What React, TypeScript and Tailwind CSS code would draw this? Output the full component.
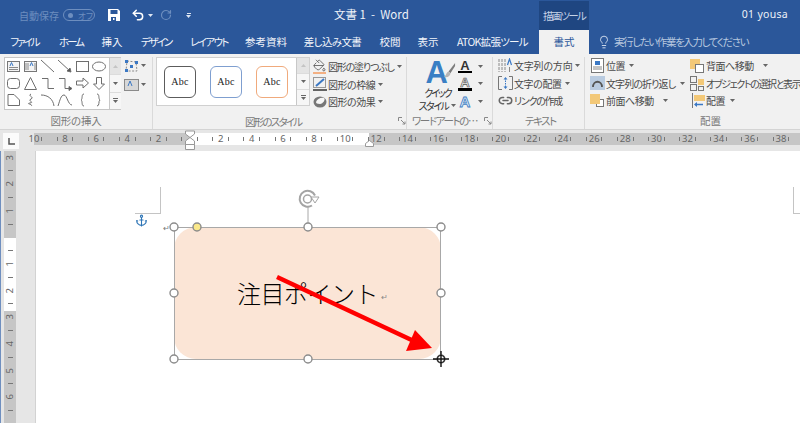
import type { ReactNode } from "react";
import { Anchor, Lightbulb, Link2, PaintBucket, RotateCcw, Undo2 } from "lucide-react";

const JP = "font-['Noto_Sans_CJK_JP','Noto_Sans',sans-serif] [font-feature-settings:'palt']";

const TABS = [
  { label: "ファイル", w: "w-[49px] tracking-[-2px]" },
  { label: "ホーム", w: "w-[44px] tracking-[-2px]" },
  { label: "挿入", w: "w-[38px]" },
  { label: "デザイン", w: "w-[50px] tracking-[-2px]" },
  { label: "レイアウト", w: "w-[56px] tracking-[-1.6px]" },
  { label: "参考資料", w: "w-[58px]" },
  { label: "差し込み文書", w: "w-[75px] tracking-[-0.6px]" },
  { label: "校閲", w: "w-[40px]" },
  { label: "表示", w: "w-[36px]" },
  { label: "ATOK拡張ツール", w: "w-[93px] tracking-[-0.7px]" },
];

function Caret({ className = "" }: { className?: string }) {
  return (
    <svg width="5" height="3" viewBox="0 0 5 3" className={`shrink-0 ${className}`}>
      <path d="M0 0h5L2.5 3z" fill="#666" />
    </svg>
  );
}

function Launcher() {
  return (
    <svg width="8" height="8" viewBox="0 0 8 8" className="shrink-0">
      <path d="M.5 4V.5H4M3 3l4 4M7 4.5V7H4.500" fill="none" stroke="#888" />
    </svg>
  );
}

function Cmd({ icon, label, caretClass = "ml-[3px]", textClass = "tracking-[-0.5px]" }: { icon: ReactNode; label: string; caretClass?: string; textClass?: string }) {
  return (
    <div className="flex h-[17.5px] items-center">
      <div className="flex w-[15px] shrink-0 items-center justify-center">{icon}</div>
      <span className={`ml-[1px] whitespace-nowrap text-[10px] text-[#4a4a4a] ${textClass}`}>{label}</span>
      {caretClass !== "hidden" && <Caret className={caretClass} />}
    </div>
  );
}

function GroupLabel({ children, className = "" }: { children: ReactNode; className?: string }) {
  return <span className={`whitespace-nowrap text-[10.5px] text-[#7a7a7a] ${className}`}>{children}</span>;
}

function ScrollButtons({ className }: { className: string }) {
  return (
    <div className={`flex shrink-0 flex-col border-l border-[#c8c8c8] ${className}`}>
      <div className="flex flex-1 items-center justify-center bg-[#e4e4e4]">
        <svg width="5" height="3" viewBox="0 0 5 3"><path d="M0 3h5L2.5 0z" fill="#c4c4c4" /></svg>
      </div>
      <div className="flex flex-1 items-center justify-center border-y border-[#dcdcdc] bg-[#f6f6f6]">
        <Caret />
      </div>
      <div className="flex flex-1 flex-col items-center justify-center gap-[1px] bg-[#f6f6f6]">
        <div className="h-[1px] w-[5px] bg-[#666]" />
        <Caret />
      </div>
    </div>
  );
}

function ShapeGallery() {
  return (
    <svg width="104" height="50" viewBox="5 59 104 50" className="shrink-0" fill="none" stroke="#6e6e6e" strokeWidth="1">
      <rect x="7.5" y="62.5" width="12" height="10" stroke="#777" fill="#f4f4f4" />
      <path d="M9 68.5h9M9 70.5h9" stroke="#8a8a8a" />
      <path d="M10 67l1.5-3.5L13 67" stroke="#3b78c4" />
      <rect x="24.5" y="62.5" width="12" height="10" stroke="#777" fill="#f4f4f4" />
      <path d="M26 64v7M28 64v7M35 64v7" stroke="#8a8a8a" />
      <path d="M30 67l1.5-3.5L33 67" stroke="#3b78c4" />
      <path d="M41 61l13 12" />
      <path d="M58 61l13 12" />
      <path d="M71 73l-4-1 3-3z" fill="#555" />
      <rect x="76.5" y="62.5" width="12" height="10" />
      <ellipse cx="99" cy="67.5" rx="6.5" ry="4.5" />
      <rect x="7.5" y="79.5" width="12" height="10" rx="3" />
      <path d="M24.5 90.5l6-12 6 12z" />
      <path d="M42 79.5h6v10h6" />
      <path d="M59 79.5h6v10h5" />
      <path d="M72 89.5l-3-2v4z" fill="#555" />
      <path d="M76.5 82h6.5v-3l5.500 5-5.500 5v-3h-6.500z" />
      <path d="M96.500 78.500h5v6.500h3l-5.500 5.500-5.500-5.500h3z" />
      <path d="M8 95.500h6l5.500 5.500v5.500h-11.500z" strokeLinejoin="round" />
      <path d="M31 95c-4 2 4 3 0 5s4 3-1 4 4 1 1 3" />
      <path d="M41 96c7 0 12 4 13 11" />
      <path d="M58 107c2-6 3-11 6-11s4 10 8 10" />
      <path d="M84 95c-3 0-1 5-3 6 2 1 0 6 3 6" />
      <path d="M97 95c3 0 1 5 3 6-2 1 0 6-3 6" />
    </svg>
  );
}

function StyleCard({ border }: { border: string }) {
  return (
    <div className={`flex h-[32px] w-[32px] shrink-0 items-center justify-center rounded-[6px] border-[1.5px] bg-white ${border}`}>
      <span className="font-['Liberation_Serif',serif] text-[10px] tracking-[0.3px] text-[#222]">Abc</span>
    </div>
  );
}

function UnderA({ outline = false }: { outline?: boolean }) {
  return (
    <div className="flex w-[14px] flex-col items-center">
      <span
        className={`font-['Liberation_Sans',sans-serif] text-[13px] font-bold leading-[11px] ${outline ? "text-[#f4f4f4] [-webkit-text-stroke:0.7px_#555]" : "text-[#333]"}`}
      >
        A
      </span>
      <div className={`w-[14px] bg-black ${outline ? "h-[3px]" : "h-[2px]"}`} />
    </div>
  );
}

function OrangeFront() {
  return (
    <svg width="15" height="14" viewBox="0 0 15 14">
      <rect x="6.500" y="5.500" width="7" height="7" fill="#fff" stroke="#777" />
      <rect x="0" y="0" width="10" height="10" fill="#f3c877" />
    </svg>
  );
}

function OrangeBack() {
  return (
    <svg width="15" height="14" viewBox="0 0 15 14">
      <rect x="0" y="0" width="10" height="10" fill="#f3c877" />
      <rect x="5.500" y="5.500" width="8" height="8" fill="#fff" stroke="#777" />
    </svg>
  );
}

function Ribbon() {
  return (
    <div className="flex h-[76px] items-stretch border-b border-[#d4d4d4] bg-[#f1f1f1] pt-[3px]">
      <div className="flex w-[153px] shrink-0 flex-col border-r border-[#dadada]">
        <div className="flex pl-[4px]">
          <div className="flex h-[53px] w-[117px] shrink-0 border border-[#c6c6c6] bg-white">
            <ShapeGallery />
            <ScrollButtons className="w-[12px]" />
          </div>
          <div className="ml-[3px] flex flex-col gap-[4px] pt-[1px]">
            <div className="flex h-[15px] items-center gap-[2px]">
              <svg width="15" height="14" viewBox="0 0 15 14" fill="none">
                <path d="M3 2l9 1 1 9-11 0z" stroke="#8a8a8a" strokeDasharray="2 1.500" />
                <rect x="1" y="1" width="3" height="3" fill="#3b78c4" />
                <rect x="11" y="2" width="3" height="3" fill="#3b78c4" />
                <rect x="6" y="6" width="3" height="3" fill="#3b78c4" />
                <rect x="1" y="10" width="3" height="3" fill="#3b78c4" />
              </svg>
              <Caret />
            </div>
            <div className="flex h-[15px] items-center gap-[2px]">
              <svg width="15" height="12" viewBox="0 0 15 12">
                <rect x=".5" y=".5" width="14" height="11" fill="#d7d7d7" stroke="#8a8a8a" />
                <path d="M4 7l2-5 2 5" fill="none" stroke="#3b78c4" />
              </svg>
              <Caret />
            </div>
          </div>
        </div>
        <div className="flex flex-1 items-center justify-center pt-[3px]">
          <GroupLabel className="tracking-[-0.2px]">図形の挿入</GroupLabel>
        </div>
      </div>

      <div className="flex w-[254px] shrink-0 flex-col border-r border-[#dadada]">
        <div className="flex pl-[3px]">
          <div className="flex h-[49px] w-[154px] shrink-0 border border-[#d0d0d0] bg-white">
            <div className="flex flex-1 items-center gap-[14px] pl-[7px]">
              <StyleCard border="border-[#5c5c5c]" />
              <StyleCard border="border-[#7f9fd0]" />
              <StyleCard border="border-[#f0aa7c]" />
            </div>
            <ScrollButtons className="w-[13px]" />
          </div>
          <div className="ml-[2px] flex flex-col pt-[1px]">
            <Cmd
              icon={<div className="border-b-[2px] border-[#f3b083]"><PaintBucket size={13} strokeWidth={1.5} color="#555" /></div>}
              label="図形の塗りつぶし"
              textClass="tracking-[-1.200px]"
            />
            <Cmd
              icon={
                <svg width="14" height="14" viewBox="0 0 14 14" fill="none">
                  <rect x=".5" y=".5" width="12" height="10" stroke="#999" />
                  <path d="M3 9l8-7" stroke="#3b78c4" strokeWidth="2" />
                  <path d="M0 13h14" stroke="#333" strokeWidth="1.500" />
                </svg>
              }
              label="図形の枠線"
            />
            <Cmd
              icon={
                <svg width="14" height="12" viewBox="0 0 14 12">
                  <ellipse cx="7" cy="6" rx="6.500" ry="5.500" fill="#777" />
                  <path d="M3 6c1-3 5-5 8-4 2 1-1 6-4 6s-4-1-4-2z" fill="#f6f6f6" />
                </svg>
              }
              label="図形の効果"
            />
          </div>
        </div>
        <div className="flex flex-1 items-center pl-[92px] pt-[3px]">
          <GroupLabel className="tracking-[-1.800px]">図形のスタイル</GroupLabel>
          <div className="ml-[97px] flex"><Launcher /></div>
        </div>
      </div>

      <div className="flex w-[86px] shrink-0 flex-col border-r border-[#dadada]">
        <div className="flex h-[53px] pl-[10px]">
          <div className="flex w-[41px] shrink-0 flex-col items-center">
            <div className="relative mt-[3px] h-[27px] w-[30px] overflow-visible pl-[3px]">
              <span className="block font-['Liberation_Sans',sans-serif] text-[31px] font-bold leading-[26px] text-[#3a7fc4]">A</span>
              <svg width="13" height="16" viewBox="0 0 14 17" className="absolute right-[-3px] top-[3px]">
                <path d="M13 0L6 9l2 2 5-8z" fill="#7d7d7d" />
                <path d="M6 9c-3 1-2 4-5 6 4 1 7-1 7-4z" fill="#b5b5b5" />
              </svg>
            </div>
            <span className="text-[10px] leading-[13px] tracking-[-2px] text-[#333]">クイック</span>
            <div className="flex items-center gap-[3px]">
              <span className="whitespace-nowrap text-[10px] leading-[13px] tracking-[-1.5px] text-[#333]">スタイル</span>
              <Caret />
            </div>
          </div>
          <div className="flex flex-col pt-[1px]">
            <div className="flex h-[17.500px] items-center gap-[6px]"><UnderA /><Caret /></div>
            <div className="flex h-[17.500px] items-center gap-[6px]"><UnderA outline /><Caret /></div>
            <div className="flex h-[17.500px] items-center gap-[6px]">
              <div className="flex w-[14px] justify-center">
                <span className="font-['Liberation_Sans',sans-serif] text-[15px] font-bold leading-[15px] text-[#dbe8f6] [-webkit-text-stroke:0.8px_#3f7fc4]">A</span>
              </div>
              <Caret />
            </div>
          </div>
        </div>
        <div className="flex flex-1 items-center pl-[5px] pt-[3px]">
          <GroupLabel className="tracking-[-1.400px]">ワードアートの…</GroupLabel>
          <div className="ml-[7px] flex"><Launcher /></div>
        </div>
      </div>

      <div className="flex w-[92px] shrink-0 flex-col border-r border-[#dadada] pl-[5px]">
        <div className="flex h-[53px] flex-col">
          <Cmd
            icon={
              <svg width="15" height="15" viewBox="0 0 15 15" fill="none">
                <path d="M1 1v13M4 1v13M7 1v13" stroke="#888" strokeDasharray="3 1" />
                <path d="M9.500 7l2-6 2 6" stroke="#3b78c4" strokeWidth="1.200" />
                <path d="M11.500 9v5" stroke="#888" />
              </svg>
            }
            label="文字列の方向"
            textClass="tracking-[-0.200px]"
          />
          <Cmd
            icon={
              <svg width="15" height="14" viewBox="0 0 15 14" fill="none">
                <path d="M4 .500H.500v13H4M11 .500h3.500v13H11" stroke="#777" />
                <path d="M7.500 2v10" stroke="#3b78c4" strokeDasharray="1.500 1" />
                <path d="M5.500 3.500l2-2.500 2 2.500zM5.500 10.500l2 2.500 2-2.500z" fill="#3b78c4" />
              </svg>
            }
            label="文字の配置"
            textClass="tracking-[-0.400px]"
          />
          <Cmd icon={<Link2 size={15} strokeWidth={2.4} color="#666" />} label="リンクの作成" caretClass="hidden" textClass="tracking-[-1.300px]" />
        </div>
        <div className="flex flex-1 items-center pl-[27px] pt-[3px]">
          <GroupLabel className="tracking-[-1.500px]">テキスト</GroupLabel>
        </div>
      </div>

      <div className="flex min-w-0 flex-1 flex-col pl-[5px]">
        <div className="flex h-[53px]">
          <div className="flex w-[100px] shrink-0 flex-col">
            <Cmd
              icon={
                <svg width="13" height="15" viewBox="0 0 13 15" fill="none">
                  <rect x=".5" y=".5" width="12" height="14" fill="#fff" stroke="#777" />
                  <rect x="4" y="3" width="5" height="4" fill="#3b78c4" />
                  <path d="M2 9h9M2 11h9" stroke="#888" />
                </svg>
              }
              label="位置"
              caretClass="ml-[4px]"
            />
            <Cmd
              icon={
                <svg width="15" height="14" viewBox="0 0 15 14" fill="none">
                  <rect width="15" height="14" fill="#b9cbe0" />
                  <path d="M3 11c0-7 9-7 9 0" stroke="#555" strokeWidth="1.800" />
                </svg>
              }
              label="文字列の折り返し"
              textClass="tracking-[-0.900px]"
              caretClass="ml-[5px]"
            />
            <Cmd icon={<OrangeFront />} label="前面へ移動" caretClass="ml-[9px]" />
          </div>
          <div className="flex flex-col">
            <Cmd icon={<OrangeBack />} label="背面へ移動" caretClass="ml-[9px]" />
            <Cmd
              icon={
                <svg width="15" height="15" viewBox="0 0 15 15" fill="none">
                  <rect x=".5" y=".5" width="6" height="6" stroke="#777" />
                  <rect x=".5" y="8.500" width="6" height="6" stroke="#777" />
                  <rect x="8" y="3" width="6" height="6" fill="#f3c877" />
                  <rect x="8.500" y="10.500" width="5" height="4" stroke="#777" />
                </svg>
              }
              label="オブジェクトの選択と表示"
              caretClass="hidden"
              textClass="tracking-[-1.400px]"
            />
            <Cmd
              icon={
                <svg width="14" height="15" viewBox="0 0 14 15" fill="none">
                  <path d="M1.500 0v15" stroke="#777" />
                  <rect x="3" y="2" width="11" height="6" fill="#f3c877" />
                  <path d="M12 11.500H4" stroke="#3b78c4" strokeWidth="1.500" />
                  <path d="M6 9l-3 2.500L6 14z" fill="#3b78c4" />
                </svg>
              }
              label="配置"
              caretClass="ml-[5px]"
            />
          </div>
        </div>
        <div className="flex flex-1 items-center pl-[110px] pt-[3px]">
          <GroupLabel>配置</GroupLabel>
        </div>
      </div>
    </div>
  );
}

function HorizontalRuler() {
  const cells = Array.from({ length: 98 }, (_, i) => i);
  return (
    <div className="relative flex h-[21px] bg-[#e6e6e6] pl-[3px] pt-[3px]">
      <div className="flex h-[16px] w-[16px] shrink-0 items-center justify-center bg-[#fbfbfb]">
        <svg width="7" height="7" viewBox="0 0 7 7"><path d="M1 0v6h6" fill="none" stroke="#555" strokeWidth="1.500" /></svg>
      </div>
      <div className="ml-[11px] flex h-[12px] flex-1 bg-[linear-gradient(to_right,transparent_4px,#c6c6c6_4px,#c6c6c6_160px,#ffffff_160px,#ffffff_339px,#c6c6c6_339px)]">
        {cells.map((i) => {
          const value = Math.abs(10 - (i / 4) * 2);
          return (
            <div key={i} className="flex h-full w-[7.79px] shrink-0 items-center justify-center overflow-visible">
              {i % 4 === 0 && value !== 0 && <span className="font-['Noto_Sans',sans-serif] text-[9.5px] leading-none text-[#666]">{value}</span>}
              {i % 2 === 1 && <div className="h-[4px] w-[1px] shrink-0 bg-[#777]" />}
            </div>
          );
        })}
      </div>
      <svg width="12" height="21" viewBox="0 0 12 21" className="absolute left-[185px] top-0">
        <path d="M.5 1h9v3l-4.500 3.500L.5 4zM5 7.500L9.500 11v3.500h-9V11zM.5 14.500h9v5h-9z" fill="#fff" stroke="#999" />
      </svg>
      <svg width="9" height="7" viewBox="0 0 9 7" className="absolute left-[365px] top-[10px]">
        <path d="M.5 6.500V3.500L4.500.5l4 3v3z" fill="#fff" stroke="#999" />
      </svg>
    </div>
  );
}

function VerticalRuler() {
  const cells = Array.from({ length: 20 }, (_, i) => i - 6);
  return (
    <div className="flex h-full w-[36px] shrink-0 border-l-[1px] border-r-[1px] border-l-[#6f8fbf] border-r-[#d2d2d2] bg-[#e6e6e6] pl-[3px]">
      <div className="flex h-full w-[12px] flex-col bg-[linear-gradient(to_bottom,#c6c6c6_87px,#ffffff_87px,#ffffff_160px,#c6c6c6_160px)]">
        {cells.map((k) => (
          <div key={k} className="flex h-[13.3px] w-full shrink-0 items-center justify-center overflow-visible">
            {k % 2 === 0 && k !== 0 && <span className="-rotate-90 font-['Noto_Sans',sans-serif] text-[9.5px] leading-none text-[#666]">{Math.abs(k) / 2}</span>}
            {k % 2 !== 0 && <div className="h-[1px] w-[5px] bg-[#777]" />}
          </div>
        ))}
      </div>
    </div>
  );
}

function Page() {
  // 座標は描画キャンバス基準: left = x - 36, top = y - 151
  const handles = [
    [174, 227], [308, 227], [441, 227], [174, 293], [441, 293], [174, 359], [308, 359], [441, 359],
  ];
  return (
    <div className="relative min-w-0 flex-1 overflow-hidden bg-white">
      <div className="absolute left-[99px] top-[36px] h-[27px] w-[26px] border-b border-r border-[#c4c4c4]" />
      <div className="absolute left-[757px] top-[36px] h-[27px] w-[10px] border-b border-l border-[#c4c4c4]" />
      <Anchor size={13} strokeWidth={2} color="#2e75b6" className="absolute left-[99px] top-[63px]" />
      <span className="absolute left-[127px] top-[73px] text-[8px] leading-none text-[#777]">↵</span>

      <div className="absolute left-[138px] top-[76px] flex h-[132px] w-[267px] items-center rounded-[22px] bg-[#fbe5d6] pl-[63px]">
        <span className="whitespace-nowrap text-[24px] font-light leading-none tracking-[-0.5px] text-black [font-feature-settings:normal]">注目ポイント</span>
        <span className="ml-[3px] mt-[8px] text-[8px] leading-none text-[#888]">↵</span>
      </div>

      <svg width="764" height="272" viewBox="36 151 764 272" className="absolute left-0 top-0" fill="none">
        <rect x="174.500" y="227.500" width="266" height="132" stroke="#a8a8a8" />
        <path d="M308 207v20" stroke="#a8a8a8" />
        <path d="M312 205.500A8 8 0 1 1 315 195.500" stroke="#a4a4a4" strokeWidth="2" />
        <circle cx="307.500" cy="199" r="4" stroke="#a4a4a4" strokeWidth="1.500" />
        <path d="M311 197h8l-4 6z" fill="#fff" stroke="#a4a4a4" />
        {handles.map(([cx, cy]) => (
          <circle key={`${cx}-${cy}`} cx={cx} cy={cy} r="4" fill="#fff" stroke="#8c8c8c" strokeWidth="1.400" />
        ))}
        <circle cx="197" cy="227" r="4" fill="#fbe98a" stroke="#8c8c8c" strokeWidth="1.400" />
        <path d="M277 277L418 343" stroke="#ff0000" strokeWidth="4.500" />
        <path d="M432 348L415 330L406 351z" fill="#ff0000" />
        <circle cx="441" cy="359" r="3.500" stroke="#222" strokeWidth="1.200" />
        <path d="M441 351v16M433 359h16" stroke="#111" strokeWidth="1.400" />
      </svg>
    </div>
  );
}

export default function App() {
  return (
    <div className={`flex h-[423px] w-[800px] flex-col overflow-hidden bg-white ${JP}`}>
      <div className="flex h-[30px] shrink-0 items-center bg-[#2b579a] text-white">
        <div className="flex w-[334px] shrink-0 items-center pl-[19px]">
          <span className="text-[10px] text-[#6d8ebf]">自動保存</span>
          <div className="ml-[4px] flex h-[12px] w-[32px] items-center rounded-full border border-[#6d8ebf] pl-[4px]">
            <div className="h-[5px] w-[5px] rounded-full bg-[#6d8ebf]" />
            <span className="ml-[5px] text-[8.5px] leading-none text-[#6d8ebf]">オフ</span>
          </div>
          <svg width="12" height="12" viewBox="0 0 12 12" className="ml-[13px]">
            <path fillRule="evenodd" d="M0 0h10l2 2v10H0zM2.500 1v4h7V1zM3 8v4h5V8zM5 9h1.500v2H5z" fill="#fff" />
          </svg>
          <Undo2 size={14} strokeWidth={2.6} color="#fff" className="ml-[11px]" />
          <svg width="5" height="3" viewBox="0 0 5 3" className="ml-[3px]"><path d="M0 0h5L2.500 3z" fill="#dfe7f3" /></svg>
          <RotateCcw size={12} strokeWidth={2.4} color="#6d8ebf" className="ml-[7px] -scale-x-100" />
          <div className="ml-[14px] flex flex-col items-center gap-[1px]">
            <div className="h-[1px] w-[4px] bg-[#dfe7f3]" />
            <svg width="5" height="3" viewBox="0 0 5 3"><path d="M0 0h5L2.500 3z" fill="#dfe7f3" /></svg>
          </div>
        </div>
        <span className="w-[205px] shrink-0 whitespace-pre text-[11.5px] text-[#eef2f8]">{"文書 1  -  Word"}</span>
        <div className="flex h-[29px] w-[50px] shrink-0 items-center justify-center self-end bg-[#1f4681]">
          <span className="whitespace-nowrap text-[10.5px] tracking-[-1.8px] text-[#c4d2e6]">描画ツール</span>
        </div>
        <span className="ml-auto pr-[12px] font-['Noto_Sans',sans-serif] text-[10.5px] tracking-[0.3px] text-[#eef2f8]">01 yousa</span>
      </div>

      <div className="flex h-[24px] shrink-0 items-center bg-[#2b579a]">
        {TABS.map((tab) => (
          <div key={tab.label} className={`${tab.w} shrink-0 whitespace-nowrap text-center text-[10.5px] text-[#f2f5fa]`}>
            {tab.label}
          </div>
        ))}
        <div className="flex h-full w-[50px] shrink-0 items-center justify-center bg-[#f1f1f1] text-[10.5px] text-[#2b579a]">書式</div>
        <Lightbulb size={14} strokeWidth={1.5} color="#dfe7f3" className="ml-[8px]" />
        <span className="ml-[3px] whitespace-nowrap text-[10.5px] tracking-[-1.4px] text-[#b7c7df]">実行したい作業を入力してください</span>
      </div>

      <Ribbon />
      <HorizontalRuler />

      <div className="flex min-h-0 flex-1">
        <VerticalRuler />
        <Page />
      </div>
    </div>
  );
}
